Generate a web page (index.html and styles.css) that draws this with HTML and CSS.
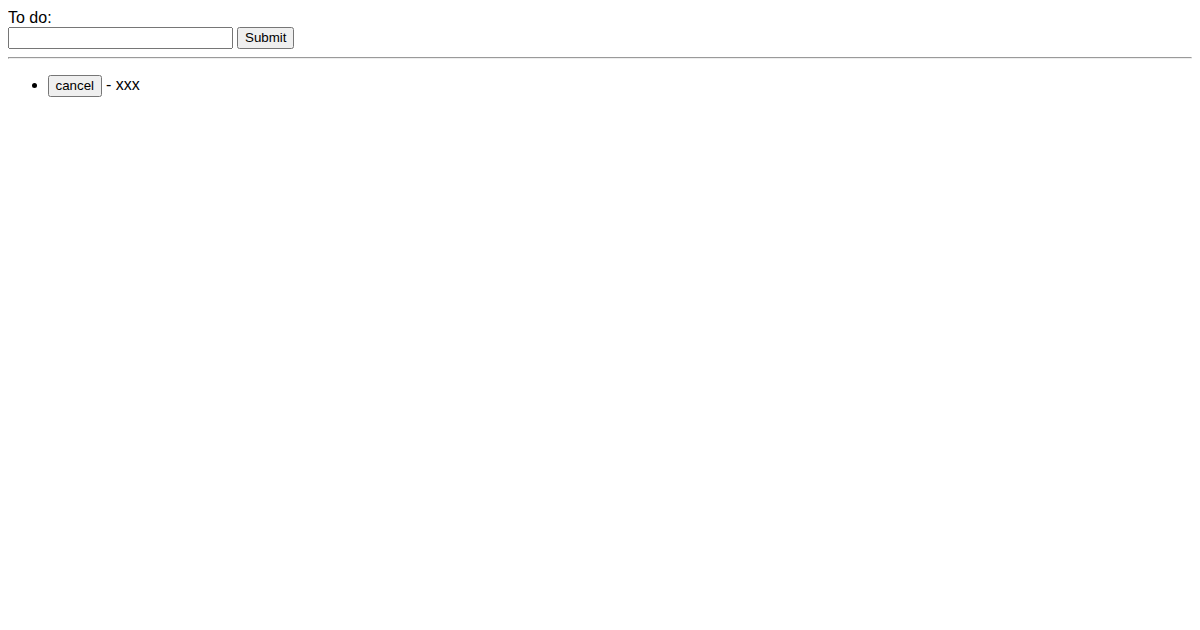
FILE: index.html
```html
<!DOCTYPE html>
<html>
<head>
<meta charset="utf-8">
<link rel="stylesheet" href="styles.css">
</head>
<body class="page">
<form class="todo-form">
<label class="todo-label" for="todo">To do:</label>
<div class="todo-row">
<input class="todo-input" id="todo" type="text">
<button class="btn" type="button">Submit</button>
</div>
</form>
<hr class="divider">
<ul class="todo-list">
<li class="todo-item"><button class="btn btn-cancel" type="button">cancel</button> - xxx</li>
</ul>
</body>
</html>
```

FILE: styles.css
```css
.page {
  margin: 8px;
  font-family: "Liberation Sans", Arial, sans-serif;
  font-size: 16px;
  color: #000;
  background: #fff;
}
.todo-form {
  margin: 0;
}
.todo-label {
  display: block;
  line-height: 19px;
  height: 19px;
}
.todo-row {
  display: flex;
  align-items: flex-start;
  gap: 4px;
}
.btn {
  font-family: "Liberation Sans", Arial, sans-serif;
  font-size: 13.33px;
  height: 22px;
  padding: 0 6px 2px;
  box-sizing: border-box;
}
.btn-cancel {
  vertical-align: top;
  padding: 0 5.5px 2px;
}
.todo-input {
  font-family: "Liberation Sans", Arial, sans-serif;
  font-size: 13.33px;
  width: 225px;
  height: 22px;
  box-sizing: border-box;
  margin: 0;
}
.divider {
  margin: 8px 0;
}
.todo-list {
  margin: 16px 0;
}
.todo-item {
  line-height: 20px;
}
```
